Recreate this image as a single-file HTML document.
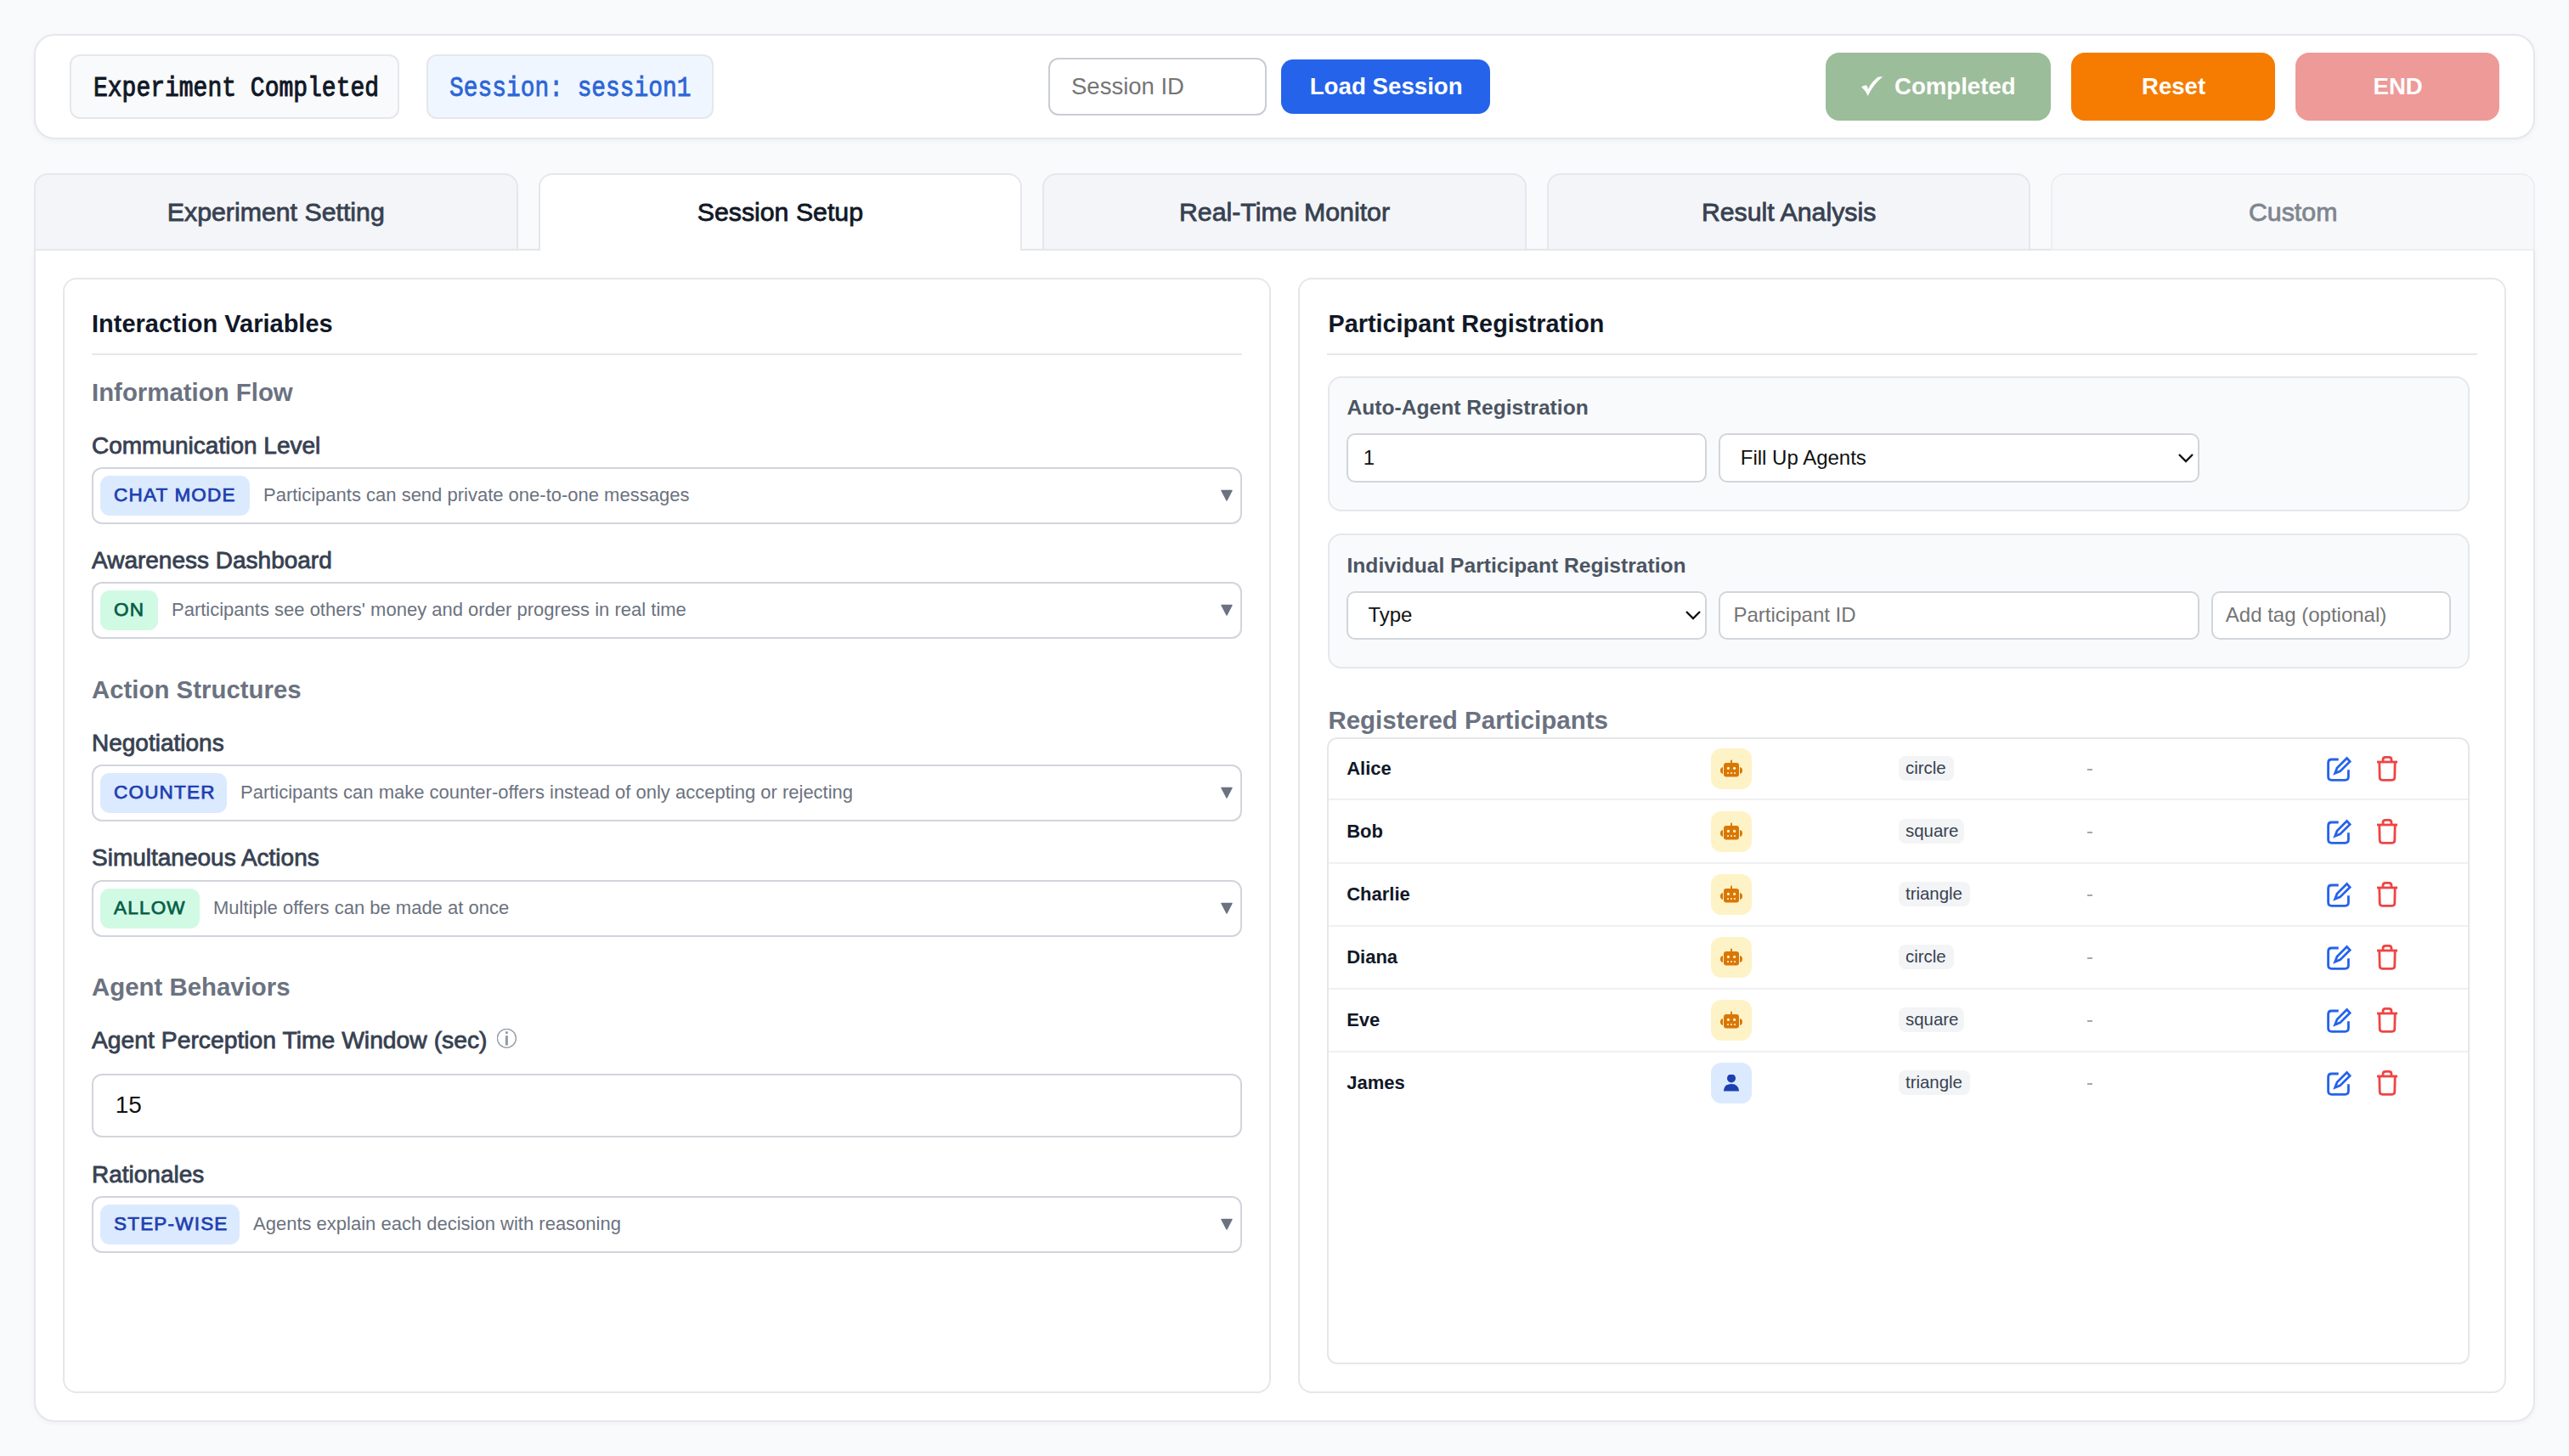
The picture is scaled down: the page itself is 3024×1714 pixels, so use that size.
<!DOCTYPE html>
<html><head><meta charset="utf-8"><style>
html,body{margin:0;padding:0;}
body{width:3024px;height:1714px;background:#f9fafb;position:relative;overflow:hidden;font-family:'Liberation Sans', sans-serif;}
@media (max-width:1700px){html{zoom:0.5;}}
</style></head><body>
<div style="position:absolute;left:40px;top:40px;width:2944px;height:124px;box-sizing:border-box;background:#fff;border:2px solid #e5e7eb;border-radius:24px;box-shadow:0 2px 6px rgba(0,0,0,0.04)"></div><div style="position:absolute;left:82px;top:64px;width:388px;height:76px;box-sizing:border-box;background:#f9fafb;border:2px solid #e5e7eb;border-radius:12px"></div><div style="position:absolute;left:110px;top:92.00px;font:400 28px/28px 'Liberation Mono', monospace;color:#111827;white-space:nowrap;-webkit-text-stroke:0.9px #111827;transform:scaleY(1.16);transform-origin:0 21.50px">Experiment Completed</div><div style="position:absolute;left:502px;top:64px;width:338px;height:76px;box-sizing:border-box;background:#eff6ff;border:2px solid #e5e7eb;border-radius:12px"></div><div style="position:absolute;left:529px;top:91.75px;font:400 27.9px/27.9px 'Liberation Mono', monospace;color:#2d66d6;white-space:nowrap;-webkit-text-stroke:0.7px #2d66d6;transform:scaleY(1.16);transform-origin:0 21.45px">Session: session1</div><div style="position:absolute;left:1234px;top:68px;width:257px;height:68px;box-sizing:border-box;background:#fff;border:2px solid #c9cdd3;border-radius:12px"></div><div style="position:absolute;left:1261px;top:88.45px;font:400 27.5px/27.5px 'Liberation Sans', sans-serif;color:#757575;white-space:nowrap;">Session ID</div><div style="position:absolute;left:1508px;top:70px;width:246px;height:64px;box-sizing:border-box;background:#2563eb;border-radius:14px"></div><div style="position:absolute;left:1541.7px;top:88.35px;font:700 27.7px/27.7px 'Liberation Sans', sans-serif;color:#fff;white-space:nowrap;">Load Session</div><div style="position:absolute;left:2149px;top:62px;width:265px;height:80px;box-sizing:border-box;background:#9bbd99;border-radius:16px"></div><svg style="position:absolute;left:2188px;top:86px" width="32" height="32" viewBox="0 0 32 32"><path d="M3 16.6 Q6.5 13.5 9.5 14.8 Q10.5 16 10.8 19.5 Q15 10 23 4.6 L28.3 4.2 Q17 13 10.6 27.1 Q7.5 20 3 16.6 Z" fill="#fff"/></svg><div style="position:absolute;left:2230px;top:87.90px;font:700 27.6px/27.6px 'Liberation Sans', sans-serif;color:#fff;white-space:nowrap;">Completed</div><div style="position:absolute;left:2438px;top:62px;width:240px;height:80px;box-sizing:border-box;background:#f57c00;border-radius:16px"></div><div style="position:absolute;left:2521px;top:87.90px;font:700 27.6px/27.6px 'Liberation Sans', sans-serif;color:#fff;white-space:nowrap;">Reset</div><div style="position:absolute;left:2702px;top:62px;width:240px;height:80px;box-sizing:border-box;background:#ee9a98;border-radius:16px"></div><div style="position:absolute;left:2793.5px;top:87.90px;font:700 27.6px/27.6px 'Liberation Sans', sans-serif;color:#fff;white-space:nowrap;">END</div><div style="position:absolute;left:40px;top:293px;width:2944px;height:1381px;box-sizing:border-box;background:#fff;border:2px solid #e5e7eb;border-radius:0 0 24px 24px;box-shadow:0 2px 6px rgba(0,0,0,0.04)"></div><div style="position:absolute;left:40.0px;top:204px;width:569.6px;height:91px;box-sizing:border-box;background:#f4f5f8;border:2px solid #e5e7eb;border-radius:16px 16px 0 0"></div><div style="position:absolute;left:40.0px;top:235.14px;width:569.6px;text-align:center;font:400 30.3px/30.3px 'Liberation Sans', sans-serif;color:#374151;-webkit-text-stroke:0.8px #374151;white-space:nowrap">Experiment Setting</div><div style="position:absolute;left:633.6px;top:204px;width:569.6px;height:91px;box-sizing:border-box;background:#fff;border:2px solid #e5e7eb;border-bottom:none;border-radius:16px 16px 0 0"></div><div style="position:absolute;left:633.6px;top:235.14px;width:569.6px;text-align:center;font:400 30.3px/30.3px 'Liberation Sans', sans-serif;color:#111827;-webkit-text-stroke:0.8px #111827;white-space:nowrap">Session Setup</div><div style="position:absolute;left:1227.2px;top:204px;width:569.6px;height:91px;box-sizing:border-box;background:#f4f5f8;border:2px solid #e5e7eb;border-radius:16px 16px 0 0"></div><div style="position:absolute;left:1227.2px;top:235.14px;width:569.6px;text-align:center;font:400 30.3px/30.3px 'Liberation Sans', sans-serif;color:#374151;-webkit-text-stroke:0.8px #374151;white-space:nowrap">Real-Time Monitor</div><div style="position:absolute;left:1820.8000000000002px;top:204px;width:569.6px;height:91px;box-sizing:border-box;background:#f4f5f8;border:2px solid #e5e7eb;border-radius:16px 16px 0 0"></div><div style="position:absolute;left:1820.8000000000002px;top:235.14px;width:569.6px;text-align:center;font:400 30.3px/30.3px 'Liberation Sans', sans-serif;color:#374151;-webkit-text-stroke:0.8px #374151;white-space:nowrap">Result Analysis</div><div style="position:absolute;left:2414.4px;top:204px;width:569.6px;height:91px;box-sizing:border-box;background:#f7f8fa;border:2px solid #eceef1;border-radius:16px 16px 0 0"></div><div style="position:absolute;left:2414.4px;top:235.14px;width:569.6px;text-align:center;font:400 30.3px/30.3px 'Liberation Sans', sans-serif;color:#7f8691;-webkit-text-stroke:0.8px #7f8691;white-space:nowrap">Custom</div><div style="position:absolute;left:74px;top:327px;width:1422px;height:1313px;box-sizing:border-box;background:#fff;border:2px solid #e5e7eb;border-radius:16px"></div><div style="position:absolute;left:108px;top:366.80px;font:700 29px/29px 'Liberation Sans', sans-serif;color:#111827;white-space:nowrap;">Interaction Variables</div><div style="position:absolute;left:108px;top:416px;width:1354px;height:2px;box-sizing:border-box;background:#e5e7eb"></div><div style="position:absolute;left:108px;top:446.80px;font:700 29.4px/29.4px 'Liberation Sans', sans-serif;color:#6b7280;white-space:nowrap;">Information Flow</div><div style="position:absolute;left:108px;top:510.50px;font:400 28px/28px 'Liberation Sans', sans-serif;color:#374151;white-space:nowrap;-webkit-text-stroke:0.8px #374151">Communication Level</div><div style="position:absolute;left:108px;top:550px;width:1354px;height:67px;box-sizing:border-box;background:#fff;border:2px solid #d1d5db;border-radius:12px"></div><div style="position:absolute;left:118px;top:560px;width:176px;height:47px;box-sizing:border-box;background:#dbeafe;border-radius:11px"></div><div style="position:absolute;left:134px;top:572.25px;font:400 22.5px/22.5px 'Liberation Sans', sans-serif;color:#1e40af;white-space:nowrap;letter-spacing:1.2px;-webkit-text-stroke:0.75px #1e40af">CHAT MODE</div><div style="position:absolute;left:310px;top:572.00px;font:400 22px/22px 'Liberation Sans', sans-serif;color:#6b7280;white-space:nowrap;">Participants can send private one-to-one messages</div><svg style="position:absolute;left:1437px;top:576px" width="14" height="14" viewBox="0 0 14 14"><path d="M1 1.5 L13 1.5 L7 13 Z" fill="#6b7280" stroke="#6b7280" stroke-width="1.5" stroke-linejoin="round"/></svg><div style="position:absolute;left:108px;top:645.50px;font:400 28px/28px 'Liberation Sans', sans-serif;color:#374151;white-space:nowrap;-webkit-text-stroke:0.8px #374151">Awareness Dashboard</div><div style="position:absolute;left:108px;top:685px;width:1354px;height:67px;box-sizing:border-box;background:#fff;border:2px solid #d1d5db;border-radius:12px"></div><div style="position:absolute;left:118px;top:695px;width:68px;height:47px;box-sizing:border-box;background:#d1fae5;border-radius:11px"></div><div style="position:absolute;left:134px;top:707.25px;font:400 22.5px/22.5px 'Liberation Sans', sans-serif;color:#065f46;white-space:nowrap;letter-spacing:1.2px;-webkit-text-stroke:0.75px #065f46">ON</div><div style="position:absolute;left:202px;top:707.00px;font:400 22px/22px 'Liberation Sans', sans-serif;color:#6b7280;white-space:nowrap;">Participants see others' money and order progress in real time</div><svg style="position:absolute;left:1437px;top:711px" width="14" height="14" viewBox="0 0 14 14"><path d="M1 1.5 L13 1.5 L7 13 Z" fill="#6b7280" stroke="#6b7280" stroke-width="1.5" stroke-linejoin="round"/></svg><div style="position:absolute;left:108px;top:797.30px;font:700 29.4px/29.4px 'Liberation Sans', sans-serif;color:#6b7280;white-space:nowrap;">Action Structures</div><div style="position:absolute;left:108px;top:861.00px;font:400 28px/28px 'Liberation Sans', sans-serif;color:#374151;white-space:nowrap;-webkit-text-stroke:0.8px #374151">Negotiations</div><div style="position:absolute;left:108px;top:900px;width:1354px;height:67px;box-sizing:border-box;background:#fff;border:2px solid #d1d5db;border-radius:12px"></div><div style="position:absolute;left:118px;top:910px;width:149px;height:47px;box-sizing:border-box;background:#dbeafe;border-radius:11px"></div><div style="position:absolute;left:134px;top:922.25px;font:400 22.5px/22.5px 'Liberation Sans', sans-serif;color:#1e40af;white-space:nowrap;letter-spacing:1.2px;-webkit-text-stroke:0.75px #1e40af">COUNTER</div><div style="position:absolute;left:283px;top:922.00px;font:400 22px/22px 'Liberation Sans', sans-serif;color:#6b7280;white-space:nowrap;">Participants can make counter-offers instead of only accepting or rejecting</div><svg style="position:absolute;left:1437px;top:926px" width="14" height="14" viewBox="0 0 14 14"><path d="M1 1.5 L13 1.5 L7 13 Z" fill="#6b7280" stroke="#6b7280" stroke-width="1.5" stroke-linejoin="round"/></svg><div style="position:absolute;left:108px;top:995.50px;font:400 28px/28px 'Liberation Sans', sans-serif;color:#374151;white-space:nowrap;-webkit-text-stroke:0.8px #374151">Simultaneous Actions</div><div style="position:absolute;left:108px;top:1036px;width:1354px;height:67px;box-sizing:border-box;background:#fff;border:2px solid #d1d5db;border-radius:12px"></div><div style="position:absolute;left:118px;top:1046px;width:117px;height:47px;box-sizing:border-box;background:#d1fae5;border-radius:11px"></div><div style="position:absolute;left:134px;top:1058.25px;font:400 22.5px/22.5px 'Liberation Sans', sans-serif;color:#065f46;white-space:nowrap;letter-spacing:1.2px;-webkit-text-stroke:0.75px #065f46">ALLOW</div><div style="position:absolute;left:251px;top:1058.00px;font:400 22px/22px 'Liberation Sans', sans-serif;color:#6b7280;white-space:nowrap;">Multiple offers can be made at once</div><svg style="position:absolute;left:1437px;top:1062px" width="14" height="14" viewBox="0 0 14 14"><path d="M1 1.5 L13 1.5 L7 13 Z" fill="#6b7280" stroke="#6b7280" stroke-width="1.5" stroke-linejoin="round"/></svg><div style="position:absolute;left:108px;top:1147.40px;font:700 29.4px/29.4px 'Liberation Sans', sans-serif;color:#6b7280;white-space:nowrap;">Agent Behaviors</div><div style="position:absolute;left:108px;top:1209.85px;font:400 28.3px/28.3px 'Liberation Sans', sans-serif;color:#374151;white-space:nowrap;-webkit-text-stroke:0.8px #374151">Agent Perception Time Window (sec)</div><svg style="position:absolute;left:585px;top:1211px" width="24" height="24" viewBox="0 0 24 24"><circle cx="11.4" cy="11.3" r="11" fill="none" stroke="#939aa6" stroke-width="1.3"/><circle cx="11.4" cy="4.6" r="1.6" fill="#939aa6"/><rect x="9.9" y="8.2" width="3" height="11.3" fill="#939aa6"/></svg><div style="position:absolute;left:108px;top:1264px;width:1354px;height:75px;box-sizing:border-box;background:#fff;border:2px solid #d1d5db;border-radius:12px"></div><div style="position:absolute;left:135.7px;top:1286.80px;font:400 28px/28px 'Liberation Sans', sans-serif;color:#111;white-space:nowrap;">15</div><div style="position:absolute;left:108px;top:1368.50px;font:400 28px/28px 'Liberation Sans', sans-serif;color:#374151;white-space:nowrap;-webkit-text-stroke:0.8px #374151">Rationales</div><div style="position:absolute;left:108px;top:1408px;width:1354px;height:67px;box-sizing:border-box;background:#fff;border:2px solid #d1d5db;border-radius:12px"></div><div style="position:absolute;left:118px;top:1418px;width:164px;height:47px;box-sizing:border-box;background:#dbeafe;border-radius:11px"></div><div style="position:absolute;left:134px;top:1430.25px;font:400 22.5px/22.5px 'Liberation Sans', sans-serif;color:#1e40af;white-space:nowrap;letter-spacing:1.2px;-webkit-text-stroke:0.75px #1e40af">STEP-WISE</div><div style="position:absolute;left:298px;top:1430.00px;font:400 22px/22px 'Liberation Sans', sans-serif;color:#6b7280;white-space:nowrap;">Agents explain each decision with reasoning</div><svg style="position:absolute;left:1437px;top:1434px" width="14" height="14" viewBox="0 0 14 14"><path d="M1 1.5 L13 1.5 L7 13 Z" fill="#6b7280" stroke="#6b7280" stroke-width="1.5" stroke-linejoin="round"/></svg><div style="position:absolute;left:1528px;top:327px;width:1422px;height:1313px;box-sizing:border-box;background:#fff;border:2px solid #e5e7eb;border-radius:16px"></div><div style="position:absolute;left:1563.5px;top:366.90px;font:700 28.8px/28.8px 'Liberation Sans', sans-serif;color:#111827;white-space:nowrap;">Participant Registration</div><div style="position:absolute;left:1562px;top:416px;width:1354px;height:2px;box-sizing:border-box;background:#e5e7eb"></div><div style="position:absolute;left:1563px;top:443px;width:1344px;height:159px;box-sizing:border-box;background:#f9fafb;border:2px solid #e5e7eb;border-radius:16px"></div><div style="position:absolute;left:1585.5px;top:467.80px;font:700 24.6px/24.6px 'Liberation Sans', sans-serif;color:#4b5563;white-space:nowrap;">Auto-Agent Registration</div><div style="position:absolute;left:1585px;top:510px;width:424px;height:58px;box-sizing:border-box;background:#fff;border:2px solid #d1d5db;border-radius:10px"></div><div style="position:absolute;left:1604.8px;top:526.90px;font:400 24px/24px 'Liberation Sans', sans-serif;color:#111;white-space:nowrap;">1</div><div style="position:absolute;left:2023px;top:510px;width:566px;height:58px;box-sizing:border-box;background:#fff;border:2px solid #d1d5db;border-radius:10px"></div><div style="position:absolute;left:2048.8px;top:526.90px;font:400 24px/24px 'Liberation Sans', sans-serif;color:#111;white-space:nowrap;">Fill Up Agents</div><svg style="position:absolute;left:2563px;top:532px" width="20" height="14" viewBox="0 0 20 14"><path d="M2 3 L10 11 L18 3" fill="none" stroke="#111" stroke-width="2.4"/></svg><div style="position:absolute;left:1563px;top:628px;width:1344px;height:159px;box-sizing:border-box;background:#f9fafb;border:2px solid #e5e7eb;border-radius:16px"></div><div style="position:absolute;left:1585.5px;top:653.50px;font:700 24.6px/24.6px 'Liberation Sans', sans-serif;color:#4b5563;white-space:nowrap;">Individual Participant Registration</div><div style="position:absolute;left:1585px;top:696px;width:424px;height:57px;box-sizing:border-box;background:#fff;border:2px solid #d1d5db;border-radius:10px"></div><div style="position:absolute;left:1610.4px;top:711.50px;font:400 24px/24px 'Liberation Sans', sans-serif;color:#111;white-space:nowrap;">Type</div><svg style="position:absolute;left:1983px;top:717px" width="20" height="14" viewBox="0 0 20 14"><path d="M2 3 L10 11 L18 3" fill="none" stroke="#111" stroke-width="2.4"/></svg><div style="position:absolute;left:2023px;top:696px;width:566px;height:57px;box-sizing:border-box;background:#fff;border:2px solid #d1d5db;border-radius:10px"></div><div style="position:absolute;left:2040.5px;top:711.50px;font:400 24px/24px 'Liberation Sans', sans-serif;color:#757575;white-space:nowrap;">Participant ID</div><div style="position:absolute;left:2603px;top:696px;width:282px;height:57px;box-sizing:border-box;background:#fff;border:2px solid #d1d5db;border-radius:10px"></div><div style="position:absolute;left:2619.8px;top:711.50px;font:400 24px/24px 'Liberation Sans', sans-serif;color:#757575;white-space:nowrap;">Add tag (optional)</div><div style="position:absolute;left:1563.4px;top:833.05px;font:700 29.5px/29.5px 'Liberation Sans', sans-serif;color:#6b7280;white-space:nowrap;">Registered Participants</div><div style="position:absolute;left:1562px;top:868px;width:1345px;height:738px;box-sizing:border-box;background:#fff;border:2px solid #e5e7eb;border-radius:12px"></div><div style="position:absolute;left:1585.2px;top:893.50px;font:700 22px/22px 'Liberation Sans', sans-serif;color:#111827;white-space:nowrap;">Alice</div><div style="position:absolute;left:2014px;top:881.0px;width:48px;height:48px;box-sizing:border-box;background:#fef3c7;border-radius:12px"></div><div style="position:absolute;left:2024px;top:894.0px;line-height:0"><svg width="28" height="22" viewBox="0 0 28 22"><rect x="13" y="0.5" width="2" height="4" rx="1" fill="#d97706"/><rect x="5" y="4" width="18" height="16.5" rx="3" fill="#d97706"/><path d="M4 9 Q1 9.5 1 13 Q1 16.5 4 17 Z" fill="#d97706"/><path d="M24 9 Q27 9.5 27 13 Q27 16.5 24 17 Z" fill="#d97706"/><circle cx="10.4" cy="10.4" r="1.6" fill="#fef3c7"/><circle cx="17.6" cy="10.4" r="1.6" fill="#fef3c7"/><rect x="9.1" y="15.2" width="1.8" height="1.8" fill="#fef3c7"/><rect x="13.1" y="15.2" width="1.8" height="1.8" fill="#fef3c7"/><rect x="17.1" y="15.2" width="1.8" height="1.8" fill="#fef3c7"/></svg></div><div style="position:absolute;left:2235px;top:890.0px;width:65px;height:29px;box-sizing:border-box;background:#f3f4f6;border-radius:8px"></div><div style="position:absolute;left:2243px;top:893.60px;font:400 20.4px/20.4px 'Liberation Sans', sans-serif;color:#374151;white-space:nowrap;">circle</div><div style="position:absolute;left:2457px;top:904.5px;width:6px;height:2px;box-sizing:border-box;background:#a3a9b3"></div><div style="position:absolute;left:2737px;top:888.0px;line-height:0"><svg width="32" height="32" viewBox="0 0 32 32"><path d="M15.7 6 H7.6 Q3.6 6 3.6 10 V26.3 Q3.6 30.3 7.6 30.3 H23.4 Q27.4 30.3 27.4 26.3 V18.2" fill="none" stroke="#2563eb" stroke-width="2.8"/><path d="M25.5 4.5 L29.1 8.4 L17.6 19.9 L11.6 22.3 L14 16 Z" fill="none" stroke="#2563eb" stroke-width="2.8" stroke-linejoin="miter"/></svg></div><div style="position:absolute;left:2796px;top:888.0px;line-height:0"><svg width="28" height="32" viewBox="0 0 28 32"><path d="M2 9 H26" stroke="#ef4444" stroke-width="2.8"/><path d="M9 9 V6.4 Q9 3.4 12 3.4 H16 Q19 3.4 19 6.4 V9" fill="none" stroke="#ef4444" stroke-width="2.8"/><path d="M4.8 9 L5.2 27.3 Q5.3 30.3 8.3 30.3 H19.7 Q22.7 30.3 22.8 27.3 L23.2 9" fill="none" stroke="#ef4444" stroke-width="2.8"/></svg></div><div style="position:absolute;left:1564px;top:940.4px;width:1341px;height:2px;box-sizing:border-box;background:#eef0f3"></div><div style="position:absolute;left:1585.2px;top:967.50px;font:700 22px/22px 'Liberation Sans', sans-serif;color:#111827;white-space:nowrap;">Bob</div><div style="position:absolute;left:2014px;top:955.0px;width:48px;height:48px;box-sizing:border-box;background:#fef3c7;border-radius:12px"></div><div style="position:absolute;left:2024px;top:968.0px;line-height:0"><svg width="28" height="22" viewBox="0 0 28 22"><rect x="13" y="0.5" width="2" height="4" rx="1" fill="#d97706"/><rect x="5" y="4" width="18" height="16.5" rx="3" fill="#d97706"/><path d="M4 9 Q1 9.5 1 13 Q1 16.5 4 17 Z" fill="#d97706"/><path d="M24 9 Q27 9.5 27 13 Q27 16.5 24 17 Z" fill="#d97706"/><circle cx="10.4" cy="10.4" r="1.6" fill="#fef3c7"/><circle cx="17.6" cy="10.4" r="1.6" fill="#fef3c7"/><rect x="9.1" y="15.2" width="1.8" height="1.8" fill="#fef3c7"/><rect x="13.1" y="15.2" width="1.8" height="1.8" fill="#fef3c7"/><rect x="17.1" y="15.2" width="1.8" height="1.8" fill="#fef3c7"/></svg></div><div style="position:absolute;left:2235px;top:964.0px;width:77px;height:29px;box-sizing:border-box;background:#f3f4f6;border-radius:8px"></div><div style="position:absolute;left:2243px;top:967.60px;font:400 20.4px/20.4px 'Liberation Sans', sans-serif;color:#374151;white-space:nowrap;">square</div><div style="position:absolute;left:2457px;top:978.5px;width:6px;height:2px;box-sizing:border-box;background:#a3a9b3"></div><div style="position:absolute;left:2737px;top:962.0px;line-height:0"><svg width="32" height="32" viewBox="0 0 32 32"><path d="M15.7 6 H7.6 Q3.6 6 3.6 10 V26.3 Q3.6 30.3 7.6 30.3 H23.4 Q27.4 30.3 27.4 26.3 V18.2" fill="none" stroke="#2563eb" stroke-width="2.8"/><path d="M25.5 4.5 L29.1 8.4 L17.6 19.9 L11.6 22.3 L14 16 Z" fill="none" stroke="#2563eb" stroke-width="2.8" stroke-linejoin="miter"/></svg></div><div style="position:absolute;left:2796px;top:962.0px;line-height:0"><svg width="28" height="32" viewBox="0 0 28 32"><path d="M2 9 H26" stroke="#ef4444" stroke-width="2.8"/><path d="M9 9 V6.4 Q9 3.4 12 3.4 H16 Q19 3.4 19 6.4 V9" fill="none" stroke="#ef4444" stroke-width="2.8"/><path d="M4.8 9 L5.2 27.3 Q5.3 30.3 8.3 30.3 H19.7 Q22.7 30.3 22.8 27.3 L23.2 9" fill="none" stroke="#ef4444" stroke-width="2.8"/></svg></div><div style="position:absolute;left:1564px;top:1014.6px;width:1341px;height:2px;box-sizing:border-box;background:#eef0f3"></div><div style="position:absolute;left:1585.2px;top:1041.50px;font:700 22px/22px 'Liberation Sans', sans-serif;color:#111827;white-space:nowrap;">Charlie</div><div style="position:absolute;left:2014px;top:1029.0px;width:48px;height:48px;box-sizing:border-box;background:#fef3c7;border-radius:12px"></div><div style="position:absolute;left:2024px;top:1042.0px;line-height:0"><svg width="28" height="22" viewBox="0 0 28 22"><rect x="13" y="0.5" width="2" height="4" rx="1" fill="#d97706"/><rect x="5" y="4" width="18" height="16.5" rx="3" fill="#d97706"/><path d="M4 9 Q1 9.5 1 13 Q1 16.5 4 17 Z" fill="#d97706"/><path d="M24 9 Q27 9.5 27 13 Q27 16.5 24 17 Z" fill="#d97706"/><circle cx="10.4" cy="10.4" r="1.6" fill="#fef3c7"/><circle cx="17.6" cy="10.4" r="1.6" fill="#fef3c7"/><rect x="9.1" y="15.2" width="1.8" height="1.8" fill="#fef3c7"/><rect x="13.1" y="15.2" width="1.8" height="1.8" fill="#fef3c7"/><rect x="17.1" y="15.2" width="1.8" height="1.8" fill="#fef3c7"/></svg></div><div style="position:absolute;left:2235px;top:1038.0px;width:84px;height:29px;box-sizing:border-box;background:#f3f4f6;border-radius:8px"></div><div style="position:absolute;left:2243px;top:1041.60px;font:400 20.4px/20.4px 'Liberation Sans', sans-serif;color:#374151;white-space:nowrap;">triangle</div><div style="position:absolute;left:2457px;top:1052.5px;width:6px;height:2px;box-sizing:border-box;background:#a3a9b3"></div><div style="position:absolute;left:2737px;top:1036.0px;line-height:0"><svg width="32" height="32" viewBox="0 0 32 32"><path d="M15.7 6 H7.6 Q3.6 6 3.6 10 V26.3 Q3.6 30.3 7.6 30.3 H23.4 Q27.4 30.3 27.4 26.3 V18.2" fill="none" stroke="#2563eb" stroke-width="2.8"/><path d="M25.5 4.5 L29.1 8.4 L17.6 19.9 L11.6 22.3 L14 16 Z" fill="none" stroke="#2563eb" stroke-width="2.8" stroke-linejoin="miter"/></svg></div><div style="position:absolute;left:2796px;top:1036.0px;line-height:0"><svg width="28" height="32" viewBox="0 0 28 32"><path d="M2 9 H26" stroke="#ef4444" stroke-width="2.8"/><path d="M9 9 V6.4 Q9 3.4 12 3.4 H16 Q19 3.4 19 6.4 V9" fill="none" stroke="#ef4444" stroke-width="2.8"/><path d="M4.8 9 L5.2 27.3 Q5.3 30.3 8.3 30.3 H19.7 Q22.7 30.3 22.8 27.3 L23.2 9" fill="none" stroke="#ef4444" stroke-width="2.8"/></svg></div><div style="position:absolute;left:1564px;top:1088.8px;width:1341px;height:2px;box-sizing:border-box;background:#eef0f3"></div><div style="position:absolute;left:1585.2px;top:1115.50px;font:700 22px/22px 'Liberation Sans', sans-serif;color:#111827;white-space:nowrap;">Diana</div><div style="position:absolute;left:2014px;top:1103.0px;width:48px;height:48px;box-sizing:border-box;background:#fef3c7;border-radius:12px"></div><div style="position:absolute;left:2024px;top:1116.0px;line-height:0"><svg width="28" height="22" viewBox="0 0 28 22"><rect x="13" y="0.5" width="2" height="4" rx="1" fill="#d97706"/><rect x="5" y="4" width="18" height="16.5" rx="3" fill="#d97706"/><path d="M4 9 Q1 9.5 1 13 Q1 16.5 4 17 Z" fill="#d97706"/><path d="M24 9 Q27 9.5 27 13 Q27 16.5 24 17 Z" fill="#d97706"/><circle cx="10.4" cy="10.4" r="1.6" fill="#fef3c7"/><circle cx="17.6" cy="10.4" r="1.6" fill="#fef3c7"/><rect x="9.1" y="15.2" width="1.8" height="1.8" fill="#fef3c7"/><rect x="13.1" y="15.2" width="1.8" height="1.8" fill="#fef3c7"/><rect x="17.1" y="15.2" width="1.8" height="1.8" fill="#fef3c7"/></svg></div><div style="position:absolute;left:2235px;top:1112.0px;width:65px;height:29px;box-sizing:border-box;background:#f3f4f6;border-radius:8px"></div><div style="position:absolute;left:2243px;top:1115.60px;font:400 20.4px/20.4px 'Liberation Sans', sans-serif;color:#374151;white-space:nowrap;">circle</div><div style="position:absolute;left:2457px;top:1126.5px;width:6px;height:2px;box-sizing:border-box;background:#a3a9b3"></div><div style="position:absolute;left:2737px;top:1110.0px;line-height:0"><svg width="32" height="32" viewBox="0 0 32 32"><path d="M15.7 6 H7.6 Q3.6 6 3.6 10 V26.3 Q3.6 30.3 7.6 30.3 H23.4 Q27.4 30.3 27.4 26.3 V18.2" fill="none" stroke="#2563eb" stroke-width="2.8"/><path d="M25.5 4.5 L29.1 8.4 L17.6 19.9 L11.6 22.3 L14 16 Z" fill="none" stroke="#2563eb" stroke-width="2.8" stroke-linejoin="miter"/></svg></div><div style="position:absolute;left:2796px;top:1110.0px;line-height:0"><svg width="28" height="32" viewBox="0 0 28 32"><path d="M2 9 H26" stroke="#ef4444" stroke-width="2.8"/><path d="M9 9 V6.4 Q9 3.4 12 3.4 H16 Q19 3.4 19 6.4 V9" fill="none" stroke="#ef4444" stroke-width="2.8"/><path d="M4.8 9 L5.2 27.3 Q5.3 30.3 8.3 30.3 H19.7 Q22.7 30.3 22.8 27.3 L23.2 9" fill="none" stroke="#ef4444" stroke-width="2.8"/></svg></div><div style="position:absolute;left:1564px;top:1163.0px;width:1341px;height:2px;box-sizing:border-box;background:#eef0f3"></div><div style="position:absolute;left:1585.2px;top:1189.50px;font:700 22px/22px 'Liberation Sans', sans-serif;color:#111827;white-space:nowrap;">Eve</div><div style="position:absolute;left:2014px;top:1177.0px;width:48px;height:48px;box-sizing:border-box;background:#fef3c7;border-radius:12px"></div><div style="position:absolute;left:2024px;top:1190.0px;line-height:0"><svg width="28" height="22" viewBox="0 0 28 22"><rect x="13" y="0.5" width="2" height="4" rx="1" fill="#d97706"/><rect x="5" y="4" width="18" height="16.5" rx="3" fill="#d97706"/><path d="M4 9 Q1 9.5 1 13 Q1 16.5 4 17 Z" fill="#d97706"/><path d="M24 9 Q27 9.5 27 13 Q27 16.5 24 17 Z" fill="#d97706"/><circle cx="10.4" cy="10.4" r="1.6" fill="#fef3c7"/><circle cx="17.6" cy="10.4" r="1.6" fill="#fef3c7"/><rect x="9.1" y="15.2" width="1.8" height="1.8" fill="#fef3c7"/><rect x="13.1" y="15.2" width="1.8" height="1.8" fill="#fef3c7"/><rect x="17.1" y="15.2" width="1.8" height="1.8" fill="#fef3c7"/></svg></div><div style="position:absolute;left:2235px;top:1186.0px;width:77px;height:29px;box-sizing:border-box;background:#f3f4f6;border-radius:8px"></div><div style="position:absolute;left:2243px;top:1189.60px;font:400 20.4px/20.4px 'Liberation Sans', sans-serif;color:#374151;white-space:nowrap;">square</div><div style="position:absolute;left:2457px;top:1200.5px;width:6px;height:2px;box-sizing:border-box;background:#a3a9b3"></div><div style="position:absolute;left:2737px;top:1184.0px;line-height:0"><svg width="32" height="32" viewBox="0 0 32 32"><path d="M15.7 6 H7.6 Q3.6 6 3.6 10 V26.3 Q3.6 30.3 7.6 30.3 H23.4 Q27.4 30.3 27.4 26.3 V18.2" fill="none" stroke="#2563eb" stroke-width="2.8"/><path d="M25.5 4.5 L29.1 8.4 L17.6 19.9 L11.6 22.3 L14 16 Z" fill="none" stroke="#2563eb" stroke-width="2.8" stroke-linejoin="miter"/></svg></div><div style="position:absolute;left:2796px;top:1184.0px;line-height:0"><svg width="28" height="32" viewBox="0 0 28 32"><path d="M2 9 H26" stroke="#ef4444" stroke-width="2.8"/><path d="M9 9 V6.4 Q9 3.4 12 3.4 H16 Q19 3.4 19 6.4 V9" fill="none" stroke="#ef4444" stroke-width="2.8"/><path d="M4.8 9 L5.2 27.3 Q5.3 30.3 8.3 30.3 H19.7 Q22.7 30.3 22.8 27.3 L23.2 9" fill="none" stroke="#ef4444" stroke-width="2.8"/></svg></div><div style="position:absolute;left:1564px;top:1237.2px;width:1341px;height:2px;box-sizing:border-box;background:#eef0f3"></div><div style="position:absolute;left:1585.2px;top:1263.50px;font:700 22px/22px 'Liberation Sans', sans-serif;color:#111827;white-space:nowrap;">James</div><div style="position:absolute;left:2014px;top:1251.0px;width:48px;height:48px;box-sizing:border-box;background:#dbeafe;border-radius:12px"></div><div style="position:absolute;left:2028px;top:1265.0px;line-height:0"><svg width="20" height="22" viewBox="0 0 20 22"><circle cx="10" cy="4.4" r="5" fill="#1e40af"/><path d="M1 19.5 Q1.5 11 10 11 Q18.5 11 19 19.5 Z" fill="#1e40af"/></svg></div><div style="position:absolute;left:2235px;top:1260.0px;width:84px;height:29px;box-sizing:border-box;background:#f3f4f6;border-radius:8px"></div><div style="position:absolute;left:2243px;top:1263.60px;font:400 20.4px/20.4px 'Liberation Sans', sans-serif;color:#374151;white-space:nowrap;">triangle</div><div style="position:absolute;left:2457px;top:1274.5px;width:6px;height:2px;box-sizing:border-box;background:#a3a9b3"></div><div style="position:absolute;left:2737px;top:1258.0px;line-height:0"><svg width="32" height="32" viewBox="0 0 32 32"><path d="M15.7 6 H7.6 Q3.6 6 3.6 10 V26.3 Q3.6 30.3 7.6 30.3 H23.4 Q27.4 30.3 27.4 26.3 V18.2" fill="none" stroke="#2563eb" stroke-width="2.8"/><path d="M25.5 4.5 L29.1 8.4 L17.6 19.9 L11.6 22.3 L14 16 Z" fill="none" stroke="#2563eb" stroke-width="2.8" stroke-linejoin="miter"/></svg></div><div style="position:absolute;left:2796px;top:1258.0px;line-height:0"><svg width="28" height="32" viewBox="0 0 28 32"><path d="M2 9 H26" stroke="#ef4444" stroke-width="2.8"/><path d="M9 9 V6.4 Q9 3.4 12 3.4 H16 Q19 3.4 19 6.4 V9" fill="none" stroke="#ef4444" stroke-width="2.8"/><path d="M4.8 9 L5.2 27.3 Q5.3 30.3 8.3 30.3 H19.7 Q22.7 30.3 22.8 27.3 L23.2 9" fill="none" stroke="#ef4444" stroke-width="2.8"/></svg></div>
</body></html>
